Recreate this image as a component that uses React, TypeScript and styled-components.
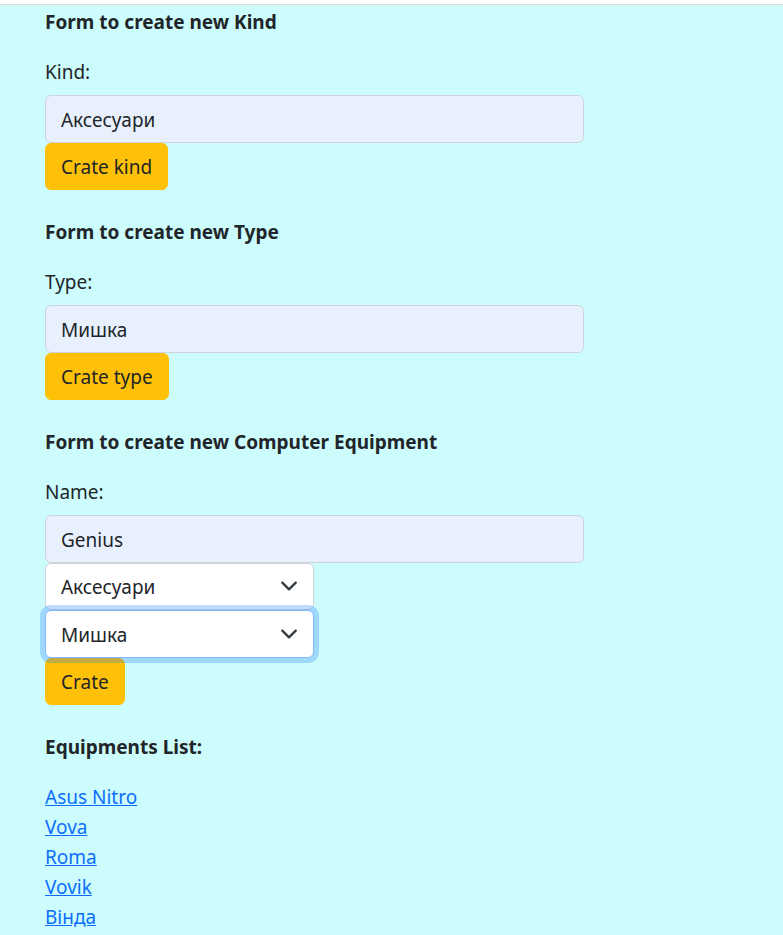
import styled, { createGlobalStyle } from "styled-components";

const GlobalStyle = createGlobalStyle`
    html, body {
        margin: 0;
        padding: 0;
        background: #ccfcfc;
    }
    body {
        font-family: "Noto Sans", "Liberation Sans", sans-serif;
        font-size: 19px;
        line-height: 30px;
        color: #212529;
    }
    * {
        box-sizing: border-box;
    }
`;

const kinds = ["Аксесуари"];
const types = ["Мишка"];
const equipments = ["Asus Nitro", "Vova", "Roma", "Vovik", "Вінда"];

const Chevron = () => (
    <ChevronIcon width="18" height="13.5" viewBox="0 0 16 12" fill="none">
        <path d="M2 3l6 6 6-6" stroke="#343a40" strokeWidth="2" strokeLinecap="round" strokeLinejoin="round" />
    </ChevronIcon>
);

const Select = ({ options, focused }: { options: string[]; focused?: boolean }) => {
    return (
        <SelectWrap>
            <SelectBox $focused={focused} defaultValue={options[0]}>
                {options.map((o) => (
                    <option key={o}>{o}</option>
                ))}
            </SelectBox>
            <Chevron />
        </SelectWrap>
    );
};

const App = () => {
    return (
        <>
            <GlobalStyle />
            <TopBar />
            <Main>
                <Form>
                    <Title>Form to create new Kind</Title>
                    <Label>Kind:</Label>
                    <Input defaultValue="Аксесуари" />
                    <Button>Crate kind</Button>
                </Form>
                <Form>
                    <Title>Form to create new Type</Title>
                    <Label>Type:</Label>
                    <Input defaultValue="Мишка" />
                    <Button>Crate type</Button>
                </Form>
                <Form>
                    <Title>Form to create new Computer Equipment</Title>
                    <Label>Name:</Label>
                    <Input defaultValue="Genius" />
                    <Select options={kinds} />
                    <Select options={types} focused />
                    <Button>Crate</Button>
                </Form>
                <Title>Equipments List:</Title>
                <List>
                    {equipments.map((e) => (
                        <ItemLink key={e} href="#">
                            {e}
                        </ItemLink>
                    ))}
                </List>
            </Main>
        </>
    );
};

export default App;

const TopBar = styled.div`
    height: 5px;
    background: #fff;
    border-bottom: 1px solid #dcdcdc;
`;

const Main = styled.main`
    padding: 1px 0 0 45px;
`;

const Form = styled.form`
    display: flex;
    flex-direction: column;
    align-items: flex-start;
    margin-bottom: 26px;
`;

const Title = styled.p`
    margin: 0 0 19px;
    padding-top: 1px;
    font-weight: 700;
`;

const Label = styled.label`
    display: block;
    padding-top: 1px;
    margin-bottom: 8px;
`;

const Input = styled.input`
    width: 539px;
    height: 47.5px;
    padding: 2px 15px 0;
    border: 1px solid #ced4da;
    border-radius: 6px;
    background: #e8f0fe;
    color: #212529;
    font: inherit;
    outline: none;
`;

const Button = styled.button`
    height: 47.5px;
    padding: 2px 15px 0;
    border: 1px solid #ffc107;
    border-radius: 6px;
    background: #ffc107;
    color: #212529;
    font: inherit;
    cursor: pointer;
`;

const SelectWrap = styled.div`
    position: relative;
    width: 269px;
`;

const SelectBox = styled.select<{ $focused?: boolean }>`
    appearance: none;
    display: block;
    width: 100%;
    height: 47.5px;
    padding: 2px 45px 0 15px;
    border: 1px solid ${(p) => (p.$focused ? "#86b7fe" : "#ced4da")};
    border-radius: 6px;
    background: #fff;
    color: #212529;
    font: inherit;
    outline: none;
    box-shadow: ${(p) => (p.$focused ? "0 0 0 5px rgba(13, 110, 253, 0.25)" : "none")};
`;

const ChevronIcon = styled.svg`
    position: absolute;
    right: 16px;
    top: 50%;
    transform: translateY(-50%);
    pointer-events: none;
`;

const List = styled.div`
    display: flex;
    flex-direction: column;
    align-items: flex-start;
`;

const ItemLink = styled.a`
    color: #0d6efd;
    text-decoration: underline;
    padding-top: 1px;
    margin-bottom: -1px;
`;
